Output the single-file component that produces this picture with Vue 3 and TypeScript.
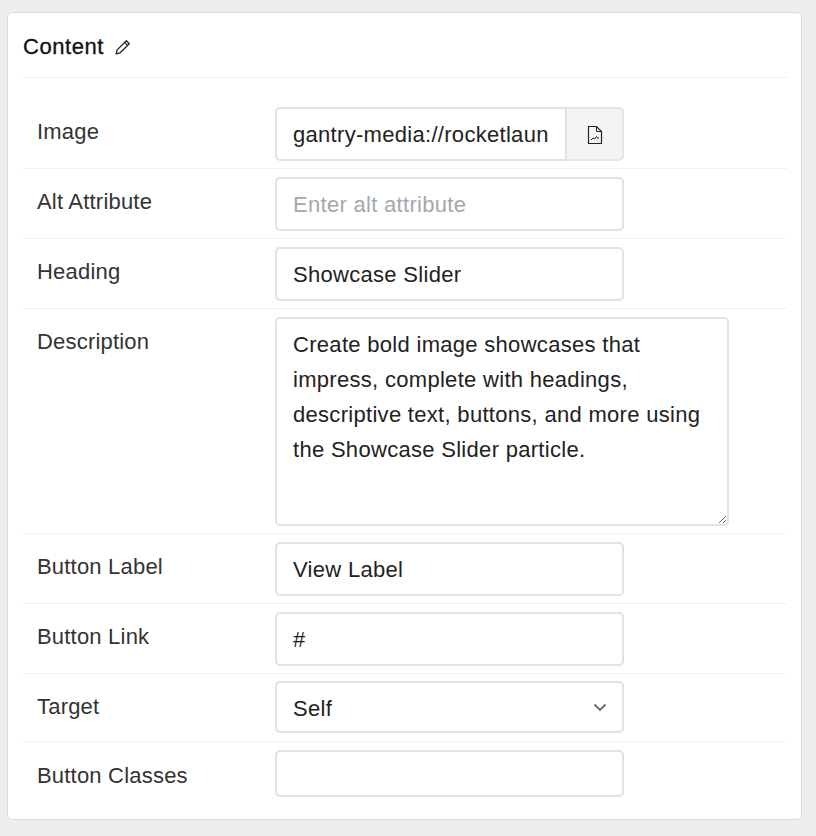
<script setup lang="ts">
const description =
  'Create bold image showcases that impress, complete with headings, descriptive text, buttons, and more using the Showcase Slider particle.'
</script>

<template>
  <div class="page">
    <section class="card">
      <header class="card-header">
        <h2>Content</h2>
        <svg class="edit-icon" width="17" height="17" viewBox="0 0 16 16" fill="none" stroke="currentColor" stroke-width="1.2" stroke-linejoin="round">
          <path d="M11.6 1.6l2.8 2.8-8.6 8.6-3.8 1 1-3.8z" />
          <path d="M10 3.2l2.8 2.8" />
        </svg>
      </header>

      <div class="row row-image">
        <label>Image</label>
        <div class="input-group">
          <input class="field" type="text" value="gantry-media://rocketlauncher/showcase.jpg" />
          <button class="picker" type="button">
            <svg width="16" height="20" viewBox="0 0 16 20" fill="none" stroke="currentColor" stroke-width="1.2">
              <path d="M1.5 1.5h8l5 5v12h-13z" />
              <path d="M9.5 1.5v5h5" stroke-width="1" />
              <path d="M4 15l2-2 1.5 1 2-2.5 1.2 1.8 1.3-.8" stroke-width="1" />
            </svg>
          </button>
        </div>
      </div>

      <div class="row">
        <label>Alt Attribute</label>
        <input class="field" type="text" placeholder="Enter alt attribute" />
      </div>

      <div class="row">
        <label>Heading</label>
        <input class="field" type="text" value="Showcase Slider" />
      </div>

      <div class="row">
        <label>Description</label>
        <textarea class="field area" :value="description"></textarea>
      </div>

      <div class="row">
        <label>Button Label</label>
        <input class="field" type="text" value="View Label" />
      </div>

      <div class="row">
        <label>Button Link</label>
        <input class="field" type="text" value="#" />
      </div>

      <div class="row row-select">
        <label>Target</label>
        <div class="select-wrap">
          <select class="field select">
            <option>Self</option>
            <option>New Window</option>
          </select>
          <svg class="chevron" width="14" height="9" viewBox="0 0 14 9" fill="none" stroke="currentColor" stroke-width="1.8">
            <path d="M1.5 1.5L7 7l5.5-5.5" />
          </svg>
        </div>
      </div>

      <div class="row row-last">
        <label>Button Classes</label>
        <input class="field short" type="text" />
      </div>
    </section>
  </div>
</template>

<style>
html,
body {
  margin: 0;
  background: #eeeeee;
}
</style>

<style scoped>
.page {
  height: 836px;
  padding: 12px 14px 16px 7px;
  box-sizing: border-box;
  font-family: "Liberation Sans", Arial, sans-serif;
  letter-spacing: 0.2px;
  color: #222;
}

.card {
  height: 808px;
  box-sizing: border-box;
  padding: 0 14px;
  background: #fff;
  border: 1px solid #dcdcdc;
  border-radius: 5px;
}

.card-header {
  display: flex;
  align-items: center;
  gap: 10px;
  height: 65px;
  padding: 4px 0 0 1px;
  box-sizing: border-box;
  border-bottom: 1px solid #eeeeee;
}

.card-header h2 {
  margin: 0;
  font-size: 22px;
  font-weight: 400;
  letter-spacing: 0.55px;
  color: #111;
  -webkit-text-stroke: 0.3px #111;
}

.edit-icon {
  color: #222;
}

.row {
  display: flex;
  align-items: flex-start;
  padding: 8px 0 7px;
  border-bottom: 1px solid #f1f1f1;
}

.row-image {
  padding-top: 29px;
}

.row-select {
  padding: 7px 0 8px;
}

.row-last {
  border-bottom: none;
}

.row label {
  flex: none;
  width: 238px;
  padding: 10px 0 0 15px;
  font-size: 22px;
  line-height: 30px;
  color: #333;
}

.row-select label,
.row-last label {
  padding-top: 11px;
}

.field {
  display: block;
  width: 349px;
  height: 54px;
  box-sizing: border-box;
  margin: 0;
  padding: 2px 16px 0;
  font-family: inherit;
  font-size: 22px;
  letter-spacing: 0.3px;
  color: #222;
  background: #fff;
  border: 2px solid #e2e2e2;
  border-radius: 5px;
  outline: none;
}

.field::placeholder {
  color: #a3a8ae;
  opacity: 1;
}

.short {
  height: 47px;
}

.area {
  width: 454px;
  height: 209px;
  padding: 8px 16px;
  line-height: 35px;
  resize: both;
}

.input-group {
  display: flex;
  width: 349px;
}

.input-group .field {
  flex: 1;
  width: auto;
  min-width: 0;
  border-radius: 5px 0 0 5px;
}

.picker {
  flex: none;
  width: 57px;
  height: 54px;
  padding: 2px 0 0;
  display: flex;
  align-items: center;
  justify-content: center;
  color: #222;
  background: #f4f4f4;
  border: 2px solid #e6e6e6;
  border-left: none;
  border-radius: 0 5px 5px 0;
}

.select-wrap {
  position: relative;
  width: 349px;
}

.select {
  height: 52px;
  appearance: none;
  -webkit-appearance: none;
}

.chevron {
  position: absolute;
  top: 22px;
  right: 17px;
  color: #666;
  pointer-events: none;
}
</style>
